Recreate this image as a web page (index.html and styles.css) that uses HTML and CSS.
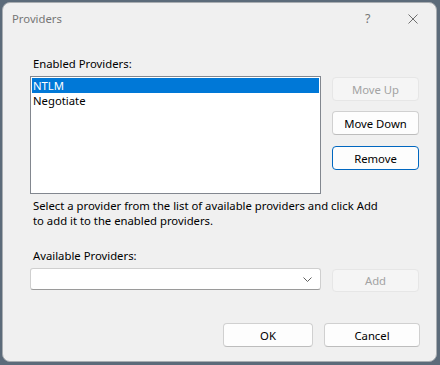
FILE: index.html
```html
<!DOCTYPE html>
<html lang="en">

<head>
    <meta charset="UTF-8" />
    <title>Providers</title>
    <link rel="stylesheet" href="styles.css">
</head>

<body>
    <div class="window">
        <!-- Title bar -->
        <div class="titlebar">
            <span class="title">Providers</span>
            <span class="help">?</span>
            <span class="close">
                <svg width="10" height="10" viewBox="0 0 10 10">
                    <path d="M0.5 0.5 L9.5 9.5 M9.5 0.5 L0.5 9.5" stroke="#6f6f6f" stroke-width="1" fill="none" />
                </svg>
            </span>
        </div>

        <div class="content">
            <div class="label">Enabled Providers:</div>
            <div class="row">
                <div class="listbox">
                    <div class="item selected">NTLM</div>
                    <div class="item">Negotiate</div>
                </div>
                <div class="side-buttons">
                    <button class="btn" disabled>Move Up</button>
                    <button class="btn">Move Down</button>
                    <button class="btn focused">Remove</button>
                </div>
            </div>

            <p class="hint">Select a provider from the list of available providers and click Add<br>to add it to the enabled providers.</p>

            <div class="label available">Available Providers:</div>
            <div class="row combo-row">
                <div class="combo">
                    <svg class="chevron" width="9" height="5" viewBox="0 0 9 5">
                        <path d="M0.5 0.5 L4.5 4.5 L8.5 0.5" stroke="#606060" stroke-width="1" fill="none" />
                    </svg>
                </div>
                <button class="btn add-btn" disabled>Add</button>
            </div>
        </div>

        <!-- Dialog buttons -->
        <div class="footer">
            <button class="btn ok-btn">OK</button>
            <button class="btn cancel-btn">Cancel</button>
        </div>
    </div>
</body>

</html>
```

FILE: styles.css
```css
body {
    margin: 0;
    padding: 2px;
    background-color: #5c6b7a;
    font-family: "Noto Sans", "Open Sans", sans-serif;
    font-size: 11.3px;
    color: #000;
}

.window {
    width: 433px;
    height: 358px;
    background-color: #f0f0f0;
    border: 1px solid #a9adb1;
    border-radius: 8px;
    display: flex;
    flex-direction: column;
}

.titlebar {
    height: 31px;
    display: flex;
    align-items: center;
    color: #767676;
    line-height: 15px;
}

.title {
    margin-left: 9px;
    flex: 1;
}

.help {
    width: 10px;
    margin-right: 33px;
    font-size: 12.5px;
}

.close {
    display: flex;
    margin-right: 18px;
}

.content {
    padding: 22px 0 0 27px;
    flex: 1;
}

.label {
    line-height: 15px;
    padding-left: 3px;
}

.row {
    display: flex;
    gap: 11px;
    margin-top: 5px;
}

.listbox {
    width: 287px;
    height: 114px;
    background: white;
    border: 1px solid #82878f;
    padding: 1px;
    box-sizing: content-box;
}

.item {
    height: 15px;
    line-height: 15px;
    padding-left: 1px;
}

.item.selected {
    background-color: #0078d7;
    color: white;
}

.side-buttons {
    display: flex;
    flex-direction: column;
    gap: 10px;
    padding-top: 1px;
}

.btn {
    width: 87px;
    height: 24px;
    padding: 0;
    font-family: inherit;
    font-size: 11.3px;
    color: #000;
    background-color: #fdfdfd;
    border: 1px solid #d0d0d0;
    border-bottom-color: #bdbdbd;
    border-radius: 4px;
}

.btn:disabled {
    background-color: #f5f5f5;
    border-color: #e6e6e6;
    color: #a3a3a3;
}

.btn.focused {
    margin-top: 1px;
    border-color: #0067c0;
}

.hint {
    margin: 4px 0 0;
    padding-left: 3px;
    line-height: 15px;
}

.available {
    margin-top: 20px;
}

.combo-row {
    align-items: flex-start;
}

.combo {
    width: 289px;
    height: 20px;
    background: white;
    border: 1px solid #cfcfcf;
    border-bottom-color: #9a9a9a;
    border-radius: 3px;
    display: flex;
    align-items: center;
    justify-content: flex-end;
}

.chevron {
    margin-right: 8px;
}

.add-btn {
    margin-top: 1px;
    height: 23px;
}

.footer {
    display: flex;
    justify-content: flex-end;
    gap: 11px;
    padding: 0 16px 14px 0;
}

.ok-btn {
    width: 90px;
}

.cancel-btn {
    width: 96px;
}
```
